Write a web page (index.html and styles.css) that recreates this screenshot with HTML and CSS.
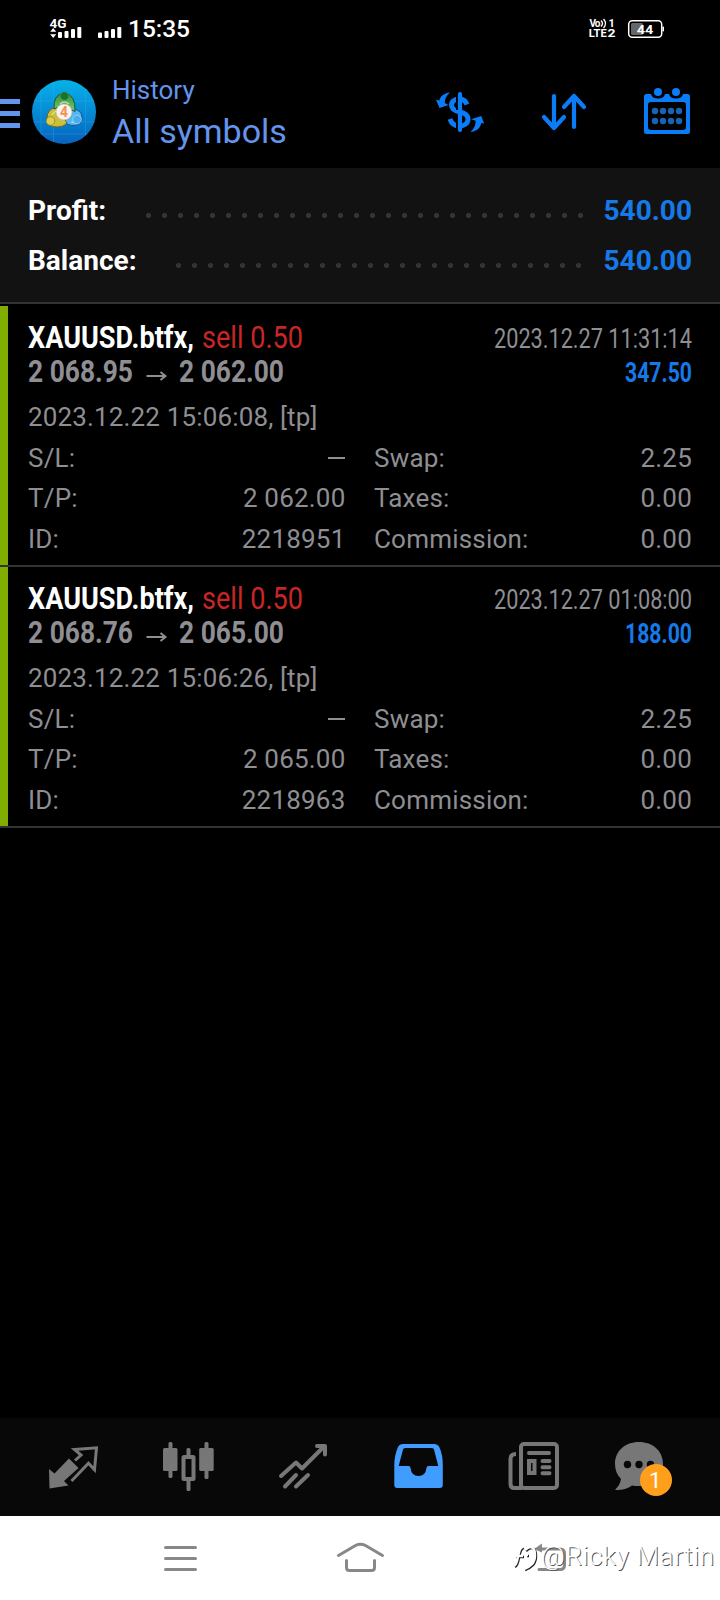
FILE: index.html
```html
<!DOCTYPE html>
<html lang="en">
<head>
<meta charset="utf-8">
<title>History</title>
<link rel="stylesheet" href="styles.css">
</head>
<body>
<div class="screen">
  <div class="status">
    <svg class="status-left" viewBox="40 0 160 58" width="160" height="58">
      <g fill="#fff">
        <text x="49.5" y="28" font-size="12.5" font-weight="700" textLength="17" lengthAdjust="spacingAndGlyphs">4G</text>
        <path d="M50.2 31.8l3-3.8 3 3.8zM50.2 34.2l3 3.8 3-3.8z"/>
        <rect x="58" y="32" width="4" height="6" rx="1"/><rect x="64.5" y="31" width="4" height="7" rx="1"/><rect x="71" y="29" width="4" height="9" rx="1"/><rect x="77.3" y="27" width="4" height="11" rx="1"/>
        <rect x="98" y="32.5" width="4" height="5.5" rx="1"/><rect x="104.5" y="31" width="4" height="7" rx="1"/><rect x="111" y="29" width="4" height="9" rx="1"/><rect x="117.3" y="27" width="4" height="11" rx="1"/>
        <text x="128" y="37" font-size="24.5" font-weight="500" textLength="62">15:35</text>
      </g>
    </svg>
    <svg class="status-right" viewBox="580 0 90 58" width="90" height="58">
      <g fill="#fff" font-weight="700">
        <text x="589.5" y="26.5" font-size="10" textLength="11">Vo</text>
        <path d="M601 20.5q3 3 0 6M603.5 19q4 4.500 0 9" fill="none" stroke="#fff" stroke-width="1.400"/>
        <text x="608.5" y="27" font-size="11">1</text>
        <text x="588.800" y="36.800" font-size="10.500" textLength="18" lengthAdjust="spacingAndGlyphs">LTE</text>
        <text x="607.500" y="36.800" font-size="11.500" textLength="8" lengthAdjust="spacingAndGlyphs">2</text>
        <rect x="628.700" y="20.700" width="33" height="16.600" rx="3.500" fill="none" stroke="#fff" stroke-width="1.500"/>
        <rect x="631" y="23" width="12" height="12" rx="1.500" fill="#666"/>
        <rect x="662.500" y="26.500" width="1.500" height="5" rx=".7"/>
        <text x="636.800" y="34" font-size="13.500" textLength="16.500" lengthAdjust="spacingAndGlyphs">44</text>
      </g>
    </svg>
  </div>

  <header class="header">
    <svg class="brand" viewBox="0 58 100 110" width="100" height="110">
      <defs>
        <linearGradient id="sky" x1="0" y1="0" x2="0" y2="1"><stop offset="0" stop-color="#06b2ea"/><stop offset="1" stop-color="#0763bd"/></linearGradient>
        <linearGradient id="green" x1="0" y1="0" x2="0" y2="1"><stop offset="0" stop-color="#2f8f45"/><stop offset="1" stop-color="#7fca6a"/></linearGradient>
      </defs>
      <g fill="#6495ed"><rect y="99" width="20" height="5"/><rect y="111" width="20" height="5"/><rect y="123" width="20" height="5"/></g>
      <circle cx="64" cy="112" r="32" fill="url(#sky)"/>
      <path d="M53.500 82v60M85.500 89v46M41 90v44M34 101h60M33 122h62M41 134h46" stroke="#3fb2ee" stroke-width=".7" opacity=".4"/>
      <path d="M73 109q9 1 9 8.500 0 8-9 8-6 0-9-5z" fill="#57b5ed" stroke="#0c5ba0"/>
      <path d="M57 107q-10 2-10 11 0 9 10 9 7 0 10-4l-5-8z" fill="#cdbf3c" stroke="#6a6820"/>
      <path d="M54 109q-1-15 10-15.500 12 .5 11 18l-6-3-9-2z" fill="url(#green)" stroke="#14552e"/>
      <path d="M60 104q4-4 9 0M52 115q2-4 5-4M71 122q4 1 6-1" fill="none" stroke="#dff5d0" stroke-width="1.200" opacity=".7"/>
      <circle cx="64.500" cy="96" r="4.300" fill="#187333" stroke="#4f9f55" stroke-width=".7"/>
      <circle cx="50.500" cy="121" r="4.300" fill="#e0cd4b" stroke="#8b8124" stroke-width=".7"/>
      <circle cx="77" cy="119.500" r="4.300" fill="#4bacec" stroke="#a5dcfa" stroke-width=".7"/>
      <circle cx="64" cy="112" r="8" fill="#f7f3ee" stroke="#b9b3a2" stroke-width=".6"/>
      <text x="60" y="117" font-size="14" font-weight="700" fill="#f39155" textLength="8" lengthAdjust="spacingAndGlyphs">4</text>
    </svg>
    <div class="titles"><div class="kicker">History</div><div class="title">All symbols</div></div>
    <svg class="tools" viewBox="420 58 300 110" width="300" height="110">
      <g fill="none" stroke="#0a7cf8">
        <path d="M467 104.500c-1.500-3.800-4-5.500-7.500-5.500-5 0-8 2.300-8 6.300 0 4.400 4 5.700 8.500 6.700 5 1.200 8 3 8 7 0 4.300-3.500 7-8.500 7-4.500 0-8-2.300-9.500-7" stroke-width="5"/>
        <path d="M457 92v18M457 114v18" stroke="#000" stroke-width="2"/>
        <path d="M460 94v36" stroke-width="4.200" stroke-linecap="round"/>
        <g stroke-width="4.200" stroke-linecap="round" stroke-linejoin="round"><path d="M554 96v32M544 117l10 11 10-11M574 127V96M564 107l10-11 10 11"/></g>
      </g>
      <g fill="#0a7cf8">
        <path d="M450 92.500c-6 .5-10 4-10.500 8l-3.500-.7 3.500 8.200 9-3-3.700-2c-.2-4 1.700-7.500 5.200-10.500zM470.500 132c6-.5 10-4 10.700-9l3 .5-3-7.500-10 3.200 4.500 1.600c0 4.500-1.700 8-5.200 11.200z"/>
        <path fill-rule="evenodd" d="M646.500 94H651q1 4.500 7 4.500t7-4.500h4q1 4.500 7 4.500t7-4.500h4.500q2.500 0 2.500 2.500v35q0 2.500-2.500 2.500h-41q-2.500 0-2.500-2.500v-35q0-2.500 2.500-2.500zM651 102q-3 0-3 3v22q0 3 3 3h32q3 0 3-3v-22q0-3-3-3z"/>
        <circle cx="658" cy="92" r="4"/><circle cx="676" cy="92" r="4"/>
      </g>
      <g fill="#1764b4"><circle cx="655" cy="111" r="3.200"/><circle cx="663" cy="111" r="3.200"/><circle cx="671" cy="111" r="3.200"/><circle cx="679" cy="111" r="3.200"/><circle cx="655" cy="121" r="3.200"/><circle cx="663" cy="121" r="3.200"/><circle cx="671" cy="121" r="3.200"/><circle cx="679" cy="121" r="3.200"/></g>
    </svg>
  </header>

  <section class="summary">
    <div class="sum-row"><span class="sum-label">Profit:</span><span class="dots dots-profit"></span><span class="sum-value">540.00</span></div>
    <div class="sum-row"><span class="sum-label">Balance:</span><span class="dots dots-balance"></span><span class="sum-value">540.00</span></div>
  </section>

  <main class="deals">
    <article class="deal">
      <svg class="deal-head" viewBox="28 306 664 86" width="664" height="86">
        <g font-size="32" font-weight="700">
          <text class="symbol" x="28" y="348" textLength="166" lengthAdjust="spacingAndGlyphs">XAUUSD.btfx,</text>
          <text class="side" x="202" y="348" textLength="101" lengthAdjust="spacingAndGlyphs">sell 0.50</text>
          <text class="price" x="28" y="382" textLength="105" lengthAdjust="spacingAndGlyphs">2 068.95</text>
          <text class="price" x="179" y="382" textLength="105" lengthAdjust="spacingAndGlyphs">2 062.00</text>
        </g>
        <path class="arrow" d="M146.500 376h18M160.500 372l5 4-5 4"/>
        <text class="stamp" x="494" y="348.300" textLength="198" lengthAdjust="spacingAndGlyphs">2023.12.27 11:31:14</text>
        <text class="gain" x="625" y="382.300" textLength="67" lengthAdjust="spacingAndGlyphs">347.50</text>
      </svg>
      <div class="comment">2023.12.22 15:06:08, [tp]</div>
      <div class="facts">
        <div class="fact"><span>S/L:</span><span class="dash"></span></div><div class="fact"><span>Swap:</span><span>2.25</span></div>
        <div class="fact"><span>T/P:</span><span>2 062.00</span></div><div class="fact"><span>Taxes:</span><span>0.00</span></div>
        <div class="fact"><span>ID:</span><span>2218951</span></div><div class="fact"><span>Commission:</span><span>0.00</span></div>
      </div>
    </article>
    <article class="deal">
      <svg class="deal-head" viewBox="28 306 664 86" width="664" height="86">
        <g font-size="32" font-weight="700">
          <text class="symbol" x="28" y="348" textLength="166" lengthAdjust="spacingAndGlyphs">XAUUSD.btfx,</text>
          <text class="side" x="202" y="348" textLength="101" lengthAdjust="spacingAndGlyphs">sell 0.50</text>
          <text class="price" x="28" y="382" textLength="105" lengthAdjust="spacingAndGlyphs">2 068.76</text>
          <text class="price" x="179" y="382" textLength="105" lengthAdjust="spacingAndGlyphs">2 065.00</text>
        </g>
        <path class="arrow" d="M146.500 376h18M160.500 372l5 4-5 4"/>
        <text class="stamp" x="494" y="348.300" textLength="198" lengthAdjust="spacingAndGlyphs">2023.12.27 01:08:00</text>
        <text class="gain" x="625" y="382.300" textLength="67" lengthAdjust="spacingAndGlyphs">188.00</text>
      </svg>
      <div class="comment">2023.12.22 15:06:26, [tp]</div>
      <div class="facts">
        <div class="fact"><span>S/L:</span><span class="dash"></span></div><div class="fact"><span>Swap:</span><span>2.25</span></div>
        <div class="fact"><span>T/P:</span><span>2 065.00</span></div><div class="fact"><span>Taxes:</span><span>0.00</span></div>
        <div class="fact"><span>ID:</span><span>2218963</span></div><div class="fact"><span>Commission:</span><span>0.00</span></div>
      </div>
    </article>
  </main>

  <nav class="tabs">
    <svg viewBox="16 1418 115 98" width="115" height="98">
      <path fill="#777" d="M49 1469l5.500 4.500L69 1458.500l9.500 9.500-14.500 13 4.500 4.500L49.500 1488.500z"/>
      <path fill="none" stroke="#777" stroke-width="3" d="M75 1460.500l6-5.500-6.500-5.500 22-1.700-2 22-6-6.500L71.500 1481"/>
    </svg>
    <svg viewBox="131 1418 115 98" width="115" height="98">
      <g fill="#777"><rect x="163" y="1448" width="14.500" height="23" rx="1.500"/><rect x="168.500" y="1442" width="4" height="36" rx="1.500"/><rect x="199.200" y="1448" width="14.500" height="23" rx="1.500"/><rect x="204.500" y="1442" width="4" height="37" rx="1.500"/><rect x="186.500" y="1448" width="4" height="43" rx="1.500"/></g>
      <rect x="183.500" y="1457" width="10" height="22" rx=".5" fill="#080808" stroke="#777" stroke-width="4"/>
    </svg>
    <svg viewBox="246 1418 115 98" width="115" height="98">
      <path fill="none" stroke="#777" stroke-width="4" stroke-linecap="round" stroke-linejoin="round" d="M281 1476l15-13.500 6 6L323.500 1447M317 1446h8v8.500M285 1486.500l11-11.500M296 1486.500l12-11.500"/>
    </svg>
    <svg viewBox="361 1418 115 98" width="115" height="98">
      <path fill="#409cff" fill-rule="evenodd" d="M403 1444h31q4 0 5.500 3.500 3.300 7.500 3.300 17.500v20q0 3-3 3h-42.500q-3 0-3-3v-20q0-9 3.500-17.500 1.300-3.500 5.200-3.500zM405 1448q-1.500 0-2 1.500l-4.300 16.500h9.800q2 0 2 2 1 8 8 8t8-8q0-2 2-2h9.800l-4.300-16.500q-.5-1.500-2-1.500z"/>
    </svg>
    <svg viewBox="476 1418 115 98" width="115" height="98">
      <g fill="none" stroke="#777" stroke-width="4"><rect x="521" y="1444" width="36" height="44" rx="3"/><path d="M516 1454q-5.500 0-5.500 5v25q0 4 4 4h8"/></g>
      <g stroke="#777" stroke-width="4" stroke-linecap="round" fill="none"><path d="M529 1453h20M542.500 1461h7M542.500 1467.200h7M542.500 1473.200h7"/><rect x="529" y="1461" width="5.500" height="12"/></g>
    </svg>
    <svg viewBox="591 1418 115 98" width="115" height="98">
      <path fill="#777" d="M639 1442c14 0 24 9 24 22s-10 22-24 22c-3 0-5 0-7-.5-4 3.200-9 4.500-17 4.500 3-3 5.500-7 6-11-4-4-6-9-6-15 0-13 10-22 24-22z"/>
      <g fill="#080808"><circle cx="627.500" cy="1464.500" r="3.700"/><circle cx="639" cy="1464.500" r="3.700"/><circle cx="650.500" cy="1464.500" r="3.700"/></g>
      <circle cx="656" cy="1480" r="16" fill="#ff9f1c"/><text x="649" y="1488" font-size="22" fill="#fff">1</text>
    </svg>
  </nav>

  <footer class="system">
    <svg viewBox="0 1516 720 84" width="720" height="84">
      <g fill="none" stroke="#888" stroke-width="3" stroke-linecap="round" stroke-linejoin="round">
        <path d="M165.500 1547.500h30M165.500 1558.500h30M165.500 1569.500h30"/>
        <path d="M338.500 1555.500l17-10q5-2.500 10 0l17 10M346.500 1560.500v7q0 3 3 3h22q3 0 3-3v-7"/>
        <path d="M540 1549h20q4.500 0 4.500 4.500v11.500q0 4.500-4.500 4.500h-21"/>
      </g>
      <path fill="#888" d="M534 1549l8-5.500v9z"/>
    </svg>
    <svg class="watermark" viewBox="505 1530 215 50" width="215" height="50">
      <g class="mark-shape"><path d="M514 1566c5-3 3-14 7-18 3-3 5-1 4 1M515 1556h8M525 1550c6-6 10-2 10 5 0 8-4 11-11 14M526 1555h2"/></g>
      <text x="541" y="1565" font-size="26" font-weight="300" textLength="173">@Ricky Martin</text>
    </svg>
  </footer>
</div>
</body>
</html>
```
FILE: styles.css
```css
* { box-sizing: border-box; }
body { margin: 0; background: #000; }
svg { display: block; flex: none; overflow: visible; }
.screen { width: 720px; height: 1600px; display: flex; flex-direction: column; overflow: hidden; font-family: Roboto, "Liberation Sans", sans-serif; }
.status { height: 58px; padding: 0 50px 0 40px; display: flex; justify-content: space-between; }
.header { height: 110px; display: flex; }
.titles { width: 320px; padding: 15px 0 0 12px; color: #6495ed; white-space: nowrap; }
.kicker { font-size: 26px; line-height: 34px; }
.title { font-size: 34px; line-height: 48px; }
.summary { height: 136px; padding: 18px 28px 0; background: #121212; border-bottom: 2px solid #333; }
.sum-row { height: 50px; display: flex; align-items: center; justify-content: space-between; font-size: 28px; font-weight: 700; line-height: 50px; }
.sum-label { color: #fff; flex: 1; }
.sum-value { color: #1679e8; width: 89px; text-align: right; }
.dots { height: 5px; margin-top: 9px; background: radial-gradient(circle at 2.5px 2.5px, #343434 2.2px, transparent 2.8px) 0 0 / 16px 5px; }
.dots-profit { width: 437px; margin-right: 20px; }
.dots-balance { width: 405px; margin-right: 22px; }
.deals { flex: 1; padding-top: 2px; }
.deal { height: 261px; padding: 0 28px; background: linear-gradient(#80ad00, #80ad00) 0 0 / 8px 259px no-repeat; border-bottom: 2px solid #333; color: #8e8e93; font-size: 26px; }
.deal-head text { font-family: Roboto, sans-serif; }
.symbol { fill: #fff; }
.side { fill: #c92626; font-weight: 400; }
.price { fill: #8e8e93; }
.arrow { fill: none; stroke: #8e8e93; stroke-width: 2; }
.stamp { fill: #8e8e93; font-size: 27px; }
.gain { fill: #1679e8; font-size: 27px; font-weight: 700; }
.comment { height: 46px; line-height: 50px; letter-spacing: .15px; white-space: nowrap; }
.facts { display: grid; grid-template-columns: 317.5px 318px; column-gap: 28.5px; grid-template-rows: 40px 40px 41px; line-height: 40px; letter-spacing: .2px; }
.fact { display: flex; justify-content: space-between; align-items: center; }
.dash { width: 17px; height: 2px; margin-right: 1px; background: #8e8e93; }
.tabs { height: 98px; padding-left: 16px; background: #080808; display: flex; }
.system { height: 84px; background: #fff; position: relative; }
.watermark { position: absolute; left: 505px; top: 14px; }
.watermark text { fill: #fff; text-shadow: 1px 1px .5px #555; }
.mark-shape { fill: none; stroke: #fff; stroke-width: 2.5; filter: drop-shadow(1px 1px .4px #222); }
```
